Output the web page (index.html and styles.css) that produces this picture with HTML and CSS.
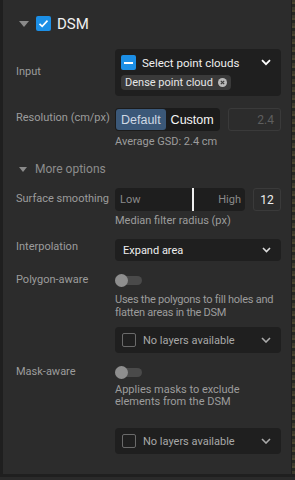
FILE: index.html
```html
<!DOCTYPE html>
<html lang="en">
<head>
    <meta charset="UTF-8">
    <meta name="viewport" content="width=device-width, initial-scale=1.0">
    <title>DSM</title>
    <link rel="stylesheet" href="styles.css">
</head>
<body>
    <div class="frame">
        <div class="panel">
            <div class="header">
                <span class="caret"></span>
                <span class="check checked">
                    <svg width="11" height="11" viewBox="0 0 11 11"><path d="M1.5 5.8 L4.2 8.4 L9.5 2.6" fill="none" stroke="#fff" stroke-width="1.6"/></svg>
                </span>
                <span class="title">DSM</span>
            </div>

            <div class="row row-input">
                <div class="label">Input</div>
                <div class="control">
                    <div class="multiselect">
                        <div class="ms-top">
                            <span class="check checked small">
                                <span class="dash"></span>
                            </span>
                            <span class="ms-text">Select point clouds</span>
                            <svg class="chev" width="10" height="7" viewBox="0 0 10 7"><path d="M1 1.2 L5 5.2 L9 1.2" fill="none" stroke="#fff" stroke-width="1.8"/></svg>
                        </div>
                        <span class="chip">Dense point cloud
                            <svg width="9" height="9" viewBox="0 0 9 9"><circle cx="4.5" cy="4.5" r="4.5" fill="#b9b9b9"/><path d="M2.8 2.8 L6.2 6.2 M6.2 2.8 L2.8 6.2" stroke="#3a3a3a" stroke-width="1.2"/></svg>
                        </span>
                    </div>
                </div>
            </div>

            <div class="row row-res">
                <div class="label">Resolution (cm/px)</div>
                <div class="control">
                    <div class="res-line">
                        <div class="segmented">
                            <span class="seg active">Default</span>
                            <span class="seg">Custom</span>
                        </div>
                        <div class="num dim">2.4</div>
                    </div>
                    <div class="hint">Average GSD: 2.4 cm</div>
                </div>
            </div>

            <div class="more">
                <span class="caret small"></span>
                <span>More options</span>
            </div>

            <div class="row row-smooth">
                <div class="label">Surface smoothing</div>
                <div class="control">
                    <div class="res-line">
                        <div class="slider">
                            <span>Low</span>
                            <span>High</span>
                            <span class="thumb"></span>
                        </div>
                        <div class="num center">12</div>
                    </div>
                    <div class="hint">Median filter radius (px)</div>
                </div>
            </div>

            <div class="row row-interp">
                <div class="label">Interpolation</div>
                <div class="control">
                    <div class="select">
                        <span>Expand area</span>
                        <svg class="chev" width="9" height="6" viewBox="0 0 9 6"><path d="M1 1 L4.5 4.5 L8 1" fill="none" stroke="#ddd" stroke-width="1.6"/></svg>
                    </div>
                </div>
            </div>

            <div class="row row-poly">
                <div class="label">Polygon-aware</div>
                <div class="control">
                    <div class="toggle"><span class="knob"></span></div>
                    <div class="desc">Uses the polygons to fill holes and flatten areas in the DSM</div>
                    <div class="select layers">
                        <span class="box"></span>
                        <span class="muted">No layers available</span>
                        <svg class="chev" width="10" height="6" viewBox="0 0 10 6"><path d="M1 1 L5 5 L9 1" fill="none" stroke="#aaa" stroke-width="1.6"/></svg>
                    </div>
                </div>
            </div>

            <div class="row row-mask">
                <div class="label">Mask-aware</div>
                <div class="control">
                    <div class="toggle"><span class="knob"></span></div>
                    <div class="desc tight">Applies masks to exclude elements from the DSM</div>
                    <div class="select layers far">
                        <span class="box"></span>
                        <span class="muted">No layers available</span>
                        <svg class="chev" width="10" height="6" viewBox="0 0 10 6"><path d="M1 1 L5 5 L9 1" fill="none" stroke="#aaa" stroke-width="1.6"/></svg>
                    </div>
                </div>
            </div>
        </div>
        <div class="map"></div>
    </div>
    <div class="footer"></div>
</body>
</html>
```

FILE: styles.css
```css
body {
    margin: 0;
    background: #1f1f1f;
    font-family: Roboto, "Liberation Sans", sans-serif;
    font-size: 11px;
    color: #9c9c9c;
    width: 295px;
    height: 480px;
    overflow: hidden;
}
.frame {
    display: flex;
    height: 474px;
}
.panel {
    margin-left: 3px;
    width: 288px;
    background: #2c2c2c;
    padding: 14px 10px 0 13px;
    box-sizing: border-box;
}
.map {
    margin-left: 1px;
    flex: 1;
    background: repeating-linear-gradient(0deg, #3c3a2c 0 3px, #262822 3px 6px, #4a4630 6px 8px);
}
.footer {
    margin-top: 3px;
    height: 3px;
    background: #2a2a2a;
}
.header {
    display: flex;
    align-items: center;
    height: 19px;
}
.caret {
    width: 0;
    height: 0;
    border-left: 5px solid transparent;
    border-right: 5px solid transparent;
    border-top: 6px solid #8a8a8a;
    margin: 1px 7px 0 3px;
}
.caret.small {
    border-left-width: 4px;
    border-right-width: 4px;
    border-top-width: 5px;
    margin: 1px 8px 0 3px;
}
.check {
    width: 15px;
    height: 15px;
    border-radius: 2px;
    display: flex;
    align-items: center;
    justify-content: center;
    flex-shrink: 0;
}
.check.checked {
    background: #1c8fe6;
}
.dash {
    width: 9px;
    height: 2px;
    background: #fff;
}
.title {
    color: #f0f0f0;
    font-size: 15px;
    margin-left: 6px;
}
.row {
    display: flex;
    align-items: flex-start;
}
.label {
    width: 99px;
    flex-shrink: 0;
    line-height: 16px;
}
.control {
    flex: 1;
    min-width: 0;
}
.row-input {
    margin-top: 16px;
}
.row-input .label {
    padding-top: 15px;
}
.multiselect {
    background: #1f1f1f;
    border-radius: 4px;
    height: 47px;
    box-sizing: border-box;
    padding: 6px 6px 0 6px;
}
.ms-top {
    display: flex;
    align-items: center;
    height: 15px;
}
.ms-text {
    color: #eee;
    margin-left: 6px;
    flex: 1;
    font-size: 11.5px;
}
.chev {
    margin-right: 4px;
}
.chip {
    display: inline-flex;
    align-items: center;
    gap: 5px;
    margin-top: 5px;
    background: #3a3a3a;
    color: #e6e6e6;
    border-radius: 4px;
    height: 15px;
    padding: 0 4px;
}
.row-res {
    margin-top: 12px;
}
.row-res .label {
    padding-top: 2px;
}
.res-line {
    display: flex;
    align-items: center;
    gap: 8px;
}
.segmented {
    display: flex;
    background: #1b1b1b;
    border-radius: 4px;
    height: 23px;
    padding: 1px;
    box-sizing: border-box;
}
.seg {
    display: flex;
    align-items: center;
    padding: 0 5px;
    color: #f5f5f5;
    font-family: "Liberation Sans", sans-serif;
    font-size: 12.5px;
    border-radius: 3px;
}
.seg.active {
    background: #3b5878;
    color: #cfd9e4;
}
.num {
    flex: 1;
    height: 23px;
    box-sizing: border-box;
    border: 1px solid #3a3a3a;
    border-radius: 3px;
    display: flex;
    align-items: center;
    justify-content: flex-end;
    padding-right: 6px;
    font-size: 12px;
}
.num.dim {
    color: #5e5e5e;
}
.num.center {
    flex: 0 0 28px;
    justify-content: center;
    padding: 0;
    color: #eee;
}
.hint {
    margin-top: 3px;
    line-height: 16px;
}
.more {
    display: flex;
    align-items: center;
    margin-top: 11px;
    font-size: 12px;
    color: #8c8c8c;
    line-height: 16px;
}
.row-smooth {
    margin-top: 11px;
}
.row-smooth .label {
    padding-top: 3px;
}
.slider {
    position: relative;
    flex: 1;
    height: 23px;
    background: #1e1e1e;
    border-radius: 4px;
    display: flex;
    align-items: center;
    justify-content: space-between;
    padding: 0 4px 0 5px;
    color: #8a8a8a;
}
.thumb {
    position: absolute;
    left: 77px;
    top: 0;
    bottom: 0;
    width: 2px;
    background: #eee;
}
.row-smooth .hint {
    margin-top: 2px;
}
.row-interp {
    margin-top: 10px;
}
.select {
    background: #1f1f1f;
    border-radius: 4px;
    height: 22px;
    display: flex;
    align-items: center;
    justify-content: space-between;
    padding: 0 6px 0 8px;
    color: #eee;
}
.row-poly {
    margin-top: 11px;
}
.toggle {
    position: relative;
    margin-top: 4px;
    width: 27px;
    height: 9px;
    border-radius: 5px;
    background: #4a4a4a;
}
.knob {
    position: absolute;
    left: 0;
    top: -2px;
    width: 13px;
    height: 13px;
    border-radius: 50%;
    background: #8e8e8e;
}
.desc {
    margin-top: 8px;
    line-height: 13px;
    letter-spacing: -0.25px;
}
.desc.tight {
    margin-top: 7px;
    line-height: 12px;
    letter-spacing: 0;
}
.layers {
    margin-top: 8px;
    height: 26px;
    justify-content: flex-start;
    padding-left: 7px;
}
.layers.far {
    margin-top: 20px;
}
.box {
    width: 12px;
    height: 12px;
    border: 1px solid #6a6a6a;
    border-radius: 2px;
    margin-right: 7px;
}
.muted {
    color: #a8a8a8;
    flex: 1;
}
.row-mask {
    margin-top: 11px;
}
```
